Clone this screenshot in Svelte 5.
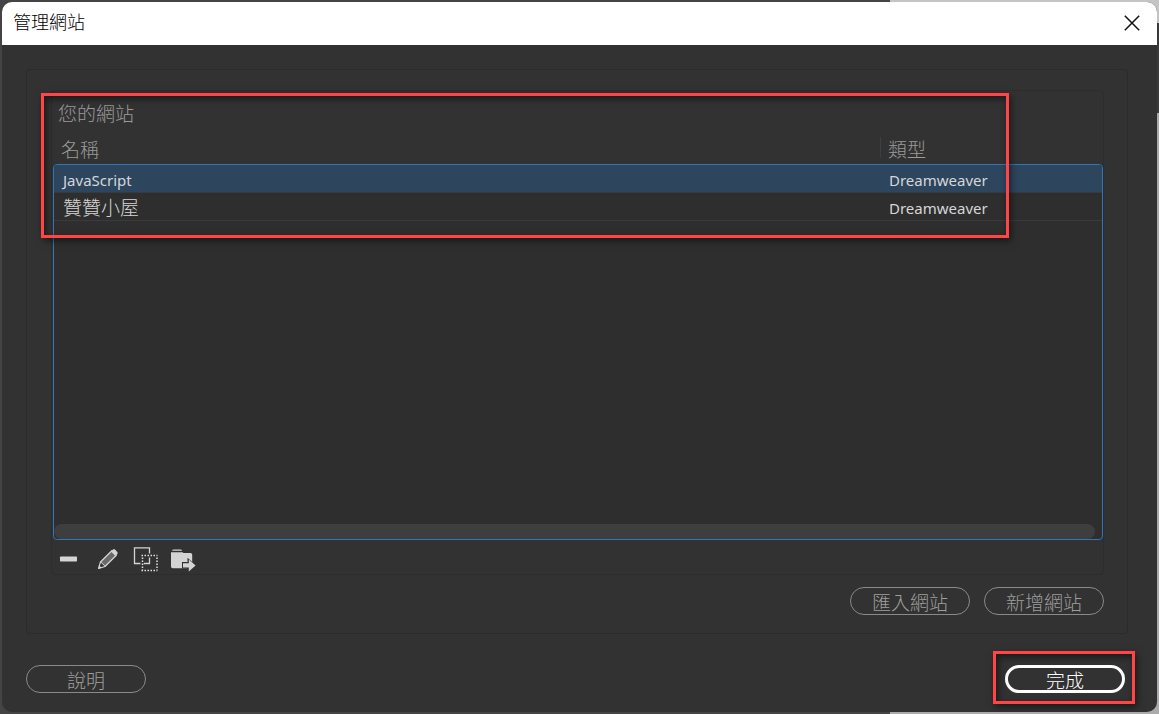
<script>
  let sites = [
    { name: "JavaScript", type: "Dreamweaver", lang: "en" },
    { name: "贊贊小屋", type: "Dreamweaver", lang: "zh-Hant" },
  ];
  let selected = 0;

  function removeSite() {
    sites = sites.filter((_, i) => i !== selected);
    selected = 0;
  }

  function duplicateSite() {
    if (sites[selected]) sites = [...sites, { ...sites[selected] }];
  }
</script>

<div class="desktop">
  <div class="dialog" role="dialog" aria-labelledby="dialog-title">
    <header>
      <h1 id="dialog-title">管理網站</h1>
      <button class="close" aria-label="關閉">
        <svg width="16" height="16" viewBox="0 0 16 16">
          <path d="M0.8 0.8L15.2 15.2M15.2 0.8L0.8 15.2" fill="none" stroke="#111" stroke-width="1.5" />
        </svg>
      </button>
    </header>

    <main>
      <section class="panel">
        <div class="sites">
          <h2 id="sites-title">您的網站</h2>
          <div class="list">
            <table aria-labelledby="sites-title">
              <thead>
                <tr>
                  <th>名稱</th>
                  <th class="type">類型</th>
                </tr>
              </thead>
              <tbody>
                {#each sites as site, i}
                  <tr class:selected={i === selected} on:click={() => (selected = i)}>
                    <td class:cjk={site.lang === "zh-Hant"} lang={site.lang}>{site.name}</td>
                    <td>{site.type}</td>
                  </tr>
                {/each}
              </tbody>
            </table>
            <div class="scrollbar"></div>
          </div>

          <div class="tools">
            <button aria-label="移除" on:click={removeSite}>
              <svg width="26" height="26" viewBox="0 0 26 26">
                <rect x="4" y="9.5" width="17" height="5" rx="0.8" fill="#d4d4d4" />
              </svg>
            </button>
            <button aria-label="編輯">
              <svg width="26" height="26" viewBox="0 0 26 26">
                <path d="M4.6 21.4L6.5 15L17.8 3.7L22.3 8.2L11 19.5Z" fill="#6a6a6a" stroke="#d4d4d4" stroke-width="1.3" stroke-linejoin="round" />
                <path d="M6.5 15L11 19.5" fill="none" stroke="#d4d4d4" stroke-width="1.1" />
                <path d="M7 15.8L10.3 19L5.8 20.3Z" fill="#323232" />
                <path d="M4.2 21.8L5.2 18.4L7.6 20.8Z" fill="#d4d4d4" />
                <path d="M17 4.5L19 2.5Q20 1.7 21 2.6L23.3 4.9Q24.2 6 23.4 7L21.4 9Z" fill="#d4d4d4" />
              </svg>
            </button>
            <button aria-label="複製" on:click={duplicateSite}>
              <svg width="26" height="26" viewBox="0 0 26 26">
                <path d="M8.5 16.5H2.5V0.8H17.5V6.5M11.5 16.5H17.5V10.5" fill="none" stroke="#d4d4d4" stroke-width="1.3" />
                <path d="M10.5 8V16.5" fill="none" stroke="#323232" stroke-width="3" />
                <path d="M9.5 8.5H25.5M9.5 23.5H25.5M10.5 10.5V23M25 10.5V23" fill="none" stroke="#e2e2e2" stroke-width="1.5" stroke-dasharray="1.5 1.5" />
              </svg>
            </button>
            <button aria-label="匯出">
              <svg width="26" height="26" viewBox="0 0 26 26">
                <path d="M2 3.8Q2.5 2.6 3.5 2.6H10.5Q11.5 2.6 12.2 3.8Z" fill="#d4d4d4" />
                <path d="M1 5.2H12.5L13.5 6H20.5Q22.2 6 22.2 7.7V19.5Q22.2 21.2 20.5 21.2H2.7Q1 21.2 1 19.5Z" fill="#d4d4d4" />
                <path d="M12 15H17.5V10.8L26 18.3V25H17.5V21.6H12Z" fill="#323232" />
                <path d="M13 16.3H18.8V12.4L25.6 18.4L18.8 24.4V20.6H13Z" fill="#d4d4d4" />
              </svg>
            </button>
          </div>
          <div class="mark mark-list"></div>
        </div>

        <div class="actions">
          <button class="pill">匯入網站</button>
          <button class="pill">新增網站</button>
        </div>
      </section>

      <footer>
        <button class="pill">說明</button>
        <div class="done">
          <button class="pill primary">完成</button>
          <div class="mark mark-done"></div>
        </div>
      </footer>
    </main>
  </div>
</div>

<style>
  :global(body) {
    margin: 0;
    background: #444;
  }

  .desktop {
    box-sizing: border-box;
    min-height: 100vh;
    padding: 2px;
    display: flex;
    font-family: "Noto Sans", "Noto Sans CJK TC", sans-serif;
    font-weight: 300;
    /* strips of the windows behind the dialog */
    background:
      linear-gradient(#c4c4c4, #c4c4c4) right top / 269px 23px no-repeat,
      linear-gradient(#3a3a3a, #3a3a3a) right 23px / 10px 90px no-repeat,
      linear-gradient(#ababab, #ababab) right bottom / 10px calc(100% - 113px) no-repeat,
      linear-gradient(#ababab, #ababab) right bottom / 269px 12px no-repeat,
      #444;
  }

  .dialog {
    flex: 1;
    display: flex;
    flex-direction: column;
    border-radius: 10px;
    overflow: hidden;
    background: #323232;
    color: #d6d6d6;
  }

  header {
    box-sizing: border-box;
    height: 43px;
    padding: 0 17px 2px 11px;
    display: flex;
    align-items: center;
    justify-content: space-between;
    background: #fff;
    color: #000;
  }

  h1,
  h2 {
    margin: 0;
    font-weight: 300;
  }

  h1 {
    font-size: 18px;
    line-height: 24px;
    padding-bottom: 2px;
  }

  button {
    font: inherit;
    color: inherit;
    background: none;
    border: none;
    padding: 0;
    cursor: pointer;
  }

  svg {
    display: block;
  }

  main {
    flex: 1;
    display: flex;
    flex-direction: column;
    padding: 24px 29px 19px 24px;
  }

  .panel {
    flex: 1;
    display: flex;
    flex-direction: column;
    border: 1px solid #2b2b2b;
    border-radius: 4px;
    padding: 20px 23px 18px 24px;
  }

  .sites {
    position: relative;
    flex: 1;
    display: flex;
    flex-direction: column;
    border: 1px solid #2d2d2d;
    border-radius: 4px;
    padding: 11px 0 0 1px;
  }

  h2 {
    padding-left: 5px;
    font-size: 19px;
    line-height: 24px;
    color: #9a9a9a;
  }

  .list {
    position: relative;
    flex: 1;
    display: flex;
    margin-top: 11px;
  }

  table {
    flex: 1;
    display: flex;
    flex-direction: column;
  }

  thead {
    display: block;
    padding: 0 1px;
    font-size: 19px;
    color: #9a9a9a;
  }

  tr {
    display: grid;
    grid-template-columns: 1fr 222px;
  }

  th {
    height: 21px;
    margin-bottom: 6px;
    padding: 0 7px;
    line-height: 26px;
    font-weight: 300;
    text-align: left;
  }

  .type {
    border-left: 1px solid #3f3f3f;
  }

  tbody {
    flex: 1;
    display: block;
    min-height: 200px;
    overflow: hidden;
    border: 1px solid #2f76bd;
    border-radius: 4px;
    background: #2e2e2e;
    font-size: 15px;
  }

  tbody tr {
    height: 27px;
    border-bottom: 1px solid #3a3a3a;
  }

  tbody tr.selected {
    background: #2e455e;
  }

  td {
    padding: 0 9px;
    line-height: 30px;
    font-weight: 400;
  }

  .cjk {
    font-size: 19px;
    font-weight: 300;
  }

  .scrollbar {
    position: absolute;
    left: 1px;
    right: 8px;
    bottom: 1px;
    height: 15px;
    border-radius: 8px;
    background: #3e3e3e;
  }

  .tools {
    display: flex;
    gap: 12px;
    padding: 7px 3px 1px;
  }

  .actions {
    display: flex;
    justify-content: flex-end;
    gap: 14px;
    margin-top: 12px;
  }

  .pill {
    box-sizing: border-box;
    width: 120px;
    height: 28px;
    border: 1px solid #8a8a8a;
    border-radius: 14px;
    font-size: 19px;
    line-height: 26px;
    padding-top: 2px;
    color: #9e9e9e;
  }

  .primary {
    border: 3px solid #fff;
    line-height: 22px;
    color: #fff;
  }

  footer {
    display: flex;
    justify-content: space-between;
    margin-top: 31px;
  }

  .done {
    position: relative;
    margin-right: 3px;
  }

  .mark {
    position: absolute;
    border: 3px solid #ff4545;
    box-shadow:
      2px 3px 7px rgba(0, 0, 0, 0.5),
      inset 2px 3px 7px rgba(0, 0, 0, 0.5);
    pointer-events: none;
  }

  .mark-list {
    top: 2px;
    left: -11px;
    right: 94px;
    height: 139px;
  }

  .mark-done {
    top: -14px;
    right: -10px;
    bottom: -11px;
    left: -12px;
  }
</style>
